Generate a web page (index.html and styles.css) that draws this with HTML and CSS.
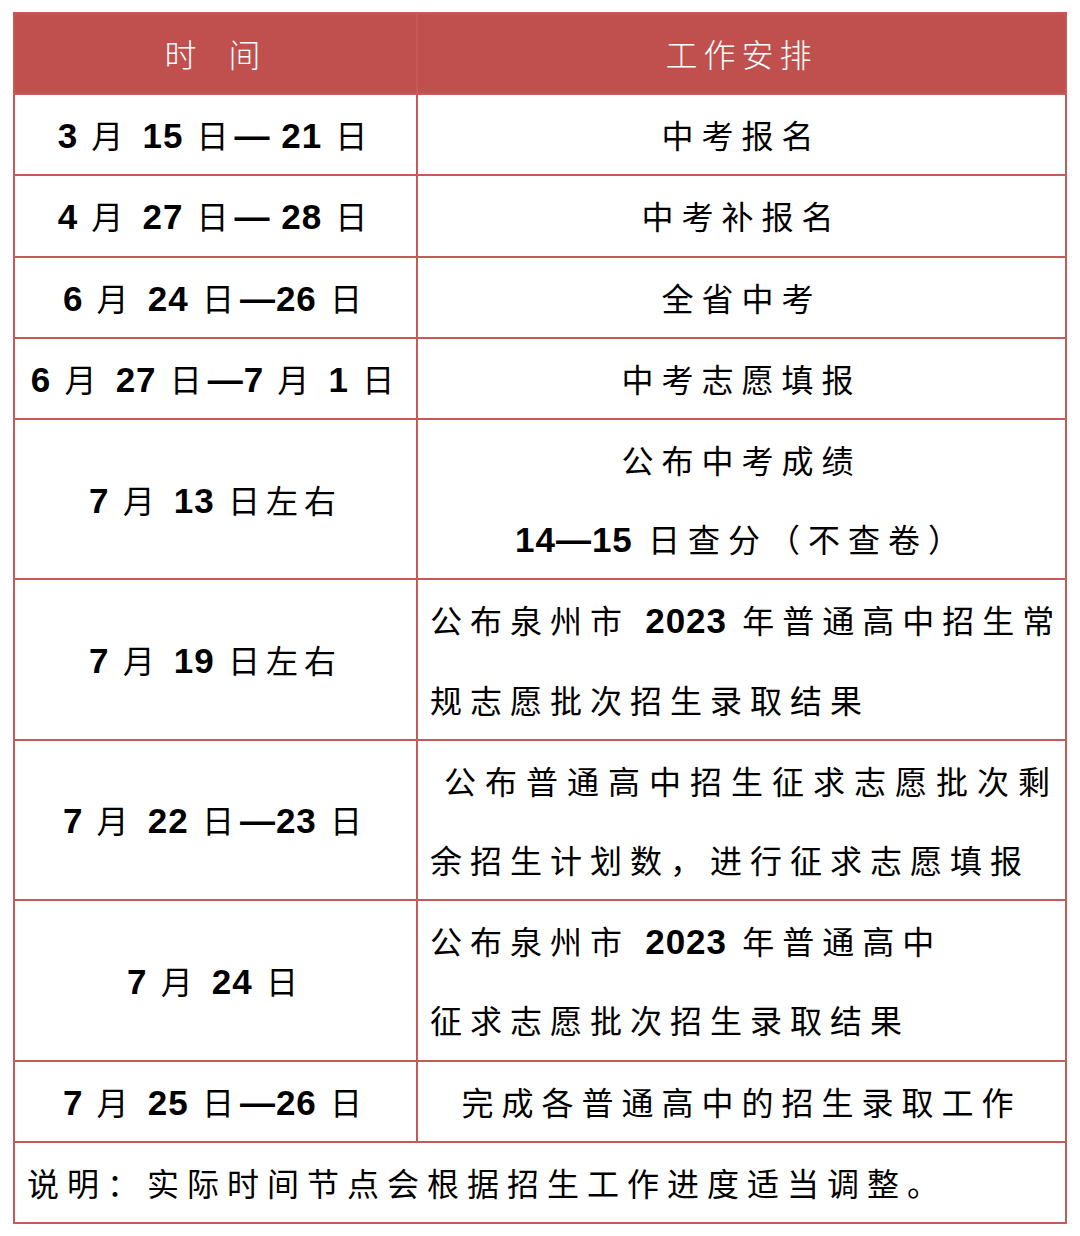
FILE: index.html
```
<!DOCTYPE html>
<html lang="zh-CN">
<head>
<meta charset="utf-8">
<title>2023 泉州中考时间安排</title>
<link rel="stylesheet" href="styles.css">
</head>
<body>
<table class="schedule">
  <colgroup>
    <col class="col-time">
    <col class="col-work">
  </colgroup>
  <thead>
    <tr>
      <th>时&nbsp;&nbsp;间</th>
      <th>工作安排</th>
    </tr>
  </thead>
  <tbody>
    <tr>
      <td class="time"><b>3</b> 月 <b>15</b> 日<b>— 21</b> 日</td>
      <td class="work center">中考报名</td>
    </tr>
    <tr>
      <td class="time"><b>4</b> 月 <b>27</b> 日<b>— 28</b> 日</td>
      <td class="work center">中考补报名</td>
    </tr>
    <tr>
      <td class="time"><b>6</b> 月 <b>24</b> 日<b>—26</b> 日</td>
      <td class="work center">全省中考</td>
    </tr>
    <tr>
      <td class="time"><b>6</b> 月 <b>27</b> 日<b>—7</b> 月 <b>1</b> 日</td>
      <td class="work center">中考志愿填报</td>
    </tr>
    <tr>
      <td class="time"><b>7</b> 月 <b>13</b> 日左右</td>
      <td class="work center">公布中考成绩<br><b>14—15</b> 日查分（不查卷）</td>
    </tr>
    <tr>
      <td class="time"><b>7</b> 月 <b>19</b> 日左右</td>
      <td class="work">公布泉州市 <b>2023</b> 年普通高中招生常<br>规志愿批次招生录取结果</td>
    </tr>
    <tr>
      <td class="time"><b>7</b> 月 <b>22</b> 日<b>—23</b> 日</td>
      <td class="work"><span class="indent">公布普通高中招生征求志愿批次剩</span><br>余招生计划数，进行征求志愿填报</td>
    </tr>
    <tr>
      <td class="time"><b>7</b> 月 <b>24</b> 日</td>
      <td class="work">公布泉州市 <b>2023</b> 年普通高中<br>征求志愿批次招生录取结果</td>
    </tr>
    <tr>
      <td class="time"><b>7</b> 月 <b>25</b> 日<b>—26</b> 日</td>
      <td class="work center">完成各普通高中的招生录取工作</td>
    </tr>
    <tr>
      <td class="note" colspan="2">说明：实际时间节点会根据招生工作进度适当调整。</td>
    </tr>
  </tbody>
</table>
</body>
</html>
```
FILE: styles.css
```
html, body {
  margin: 0;
  background: #ffffff;
}

body {
  padding: 12px 13px;
  font-family: "Noto Sans CJK SC", "Liberation Sans", sans-serif;
  color: #000000;
}

.schedule {
  width: 1054px;
  border-collapse: collapse;
  table-layout: fixed;
}

.col-time {
  width: 403px;
}

.schedule th,
.schedule td {
  border: 2px solid #c55a57;
  padding: 0;
  line-height: 79.2px;
  white-space: nowrap;
  vertical-align: middle;
}

.schedule th {
  background: #c0504d;
  color: #ffffff;
  font-weight: 300;
  font-size: 32px;
  letter-spacing: 6px;
  text-align: center;
}

.schedule td {
  font-size: 32px;
  font-weight: 400;
  letter-spacing: 8px;
}

.schedule .time {
  letter-spacing: 6px;
}

.schedule b {
  font-family: "Liberation Sans", "Noto Sans CJK SC", sans-serif;
  font-weight: 700;
  font-size: 35px;
  line-height: 1;
  letter-spacing: 1px;
}

.schedule .time {
  text-align: center;
}

.schedule .work {
  text-align: left;
  padding-left: 12px;
}

.schedule .work.center {
  text-align: center;
  padding-left: 0;
}

.indent {
  padding-left: 14px;
  letter-spacing: 9px;
}

.schedule .note {
  text-align: left;
  padding-left: 12px;
}
```
